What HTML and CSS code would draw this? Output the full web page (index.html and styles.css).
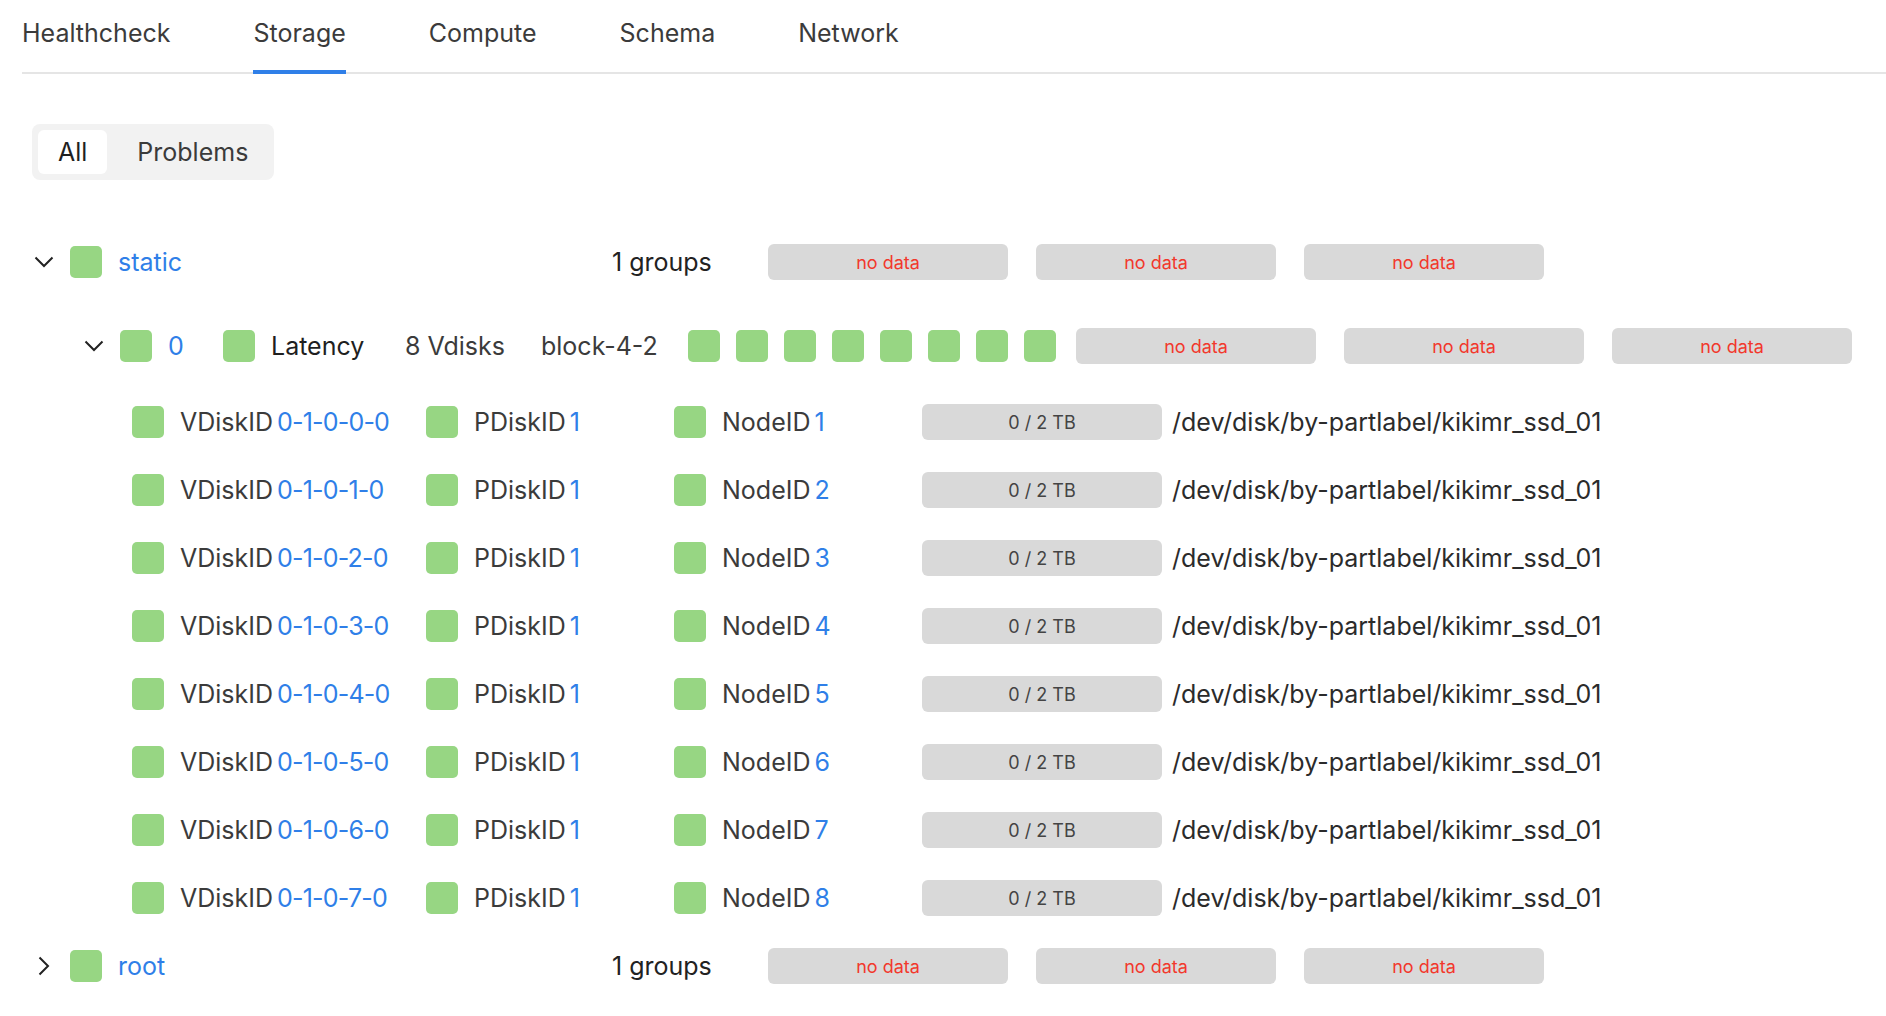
FILE: index.html
```html
<!DOCTYPE html>
<html lang="en">
<head>
<meta charset="utf-8">
<title>Storage</title>
<link rel="stylesheet" href="styles.css">
</head>
<body>
<div class="page">
  <nav class="tabs">
    <div class="tab">Healthcheck</div>
    <div class="tab active">Storage</div>
    <div class="tab">Compute</div>
    <div class="tab">Schema</div>
    <div class="tab">Network</div>
  </nav>

  <div class="segmented">
    <div class="seg-btn selected">All</div>
    <div class="seg-btn">Problems</div>
  </div>

  <div class="tree">
    <div class="row pool">
      <span class="chev"><svg width="20" height="12" viewBox="0 0 20 12"><path d="M1.5 1.5 L10 10 L18.5 1.5" fill="none" stroke="#222" stroke-width="2"/></svg></span>
      <span class="sq"></span>
      <a class="name link">static</a>
      <span class="count">1 groups</span>
      <div class="bars">
        <div class="bar nodata">no data</div>
        <div class="bar nodata">no data</div>
        <div class="bar nodata">no data</div>
      </div>
    </div>

    <div class="row group">
      <span class="chev"><svg width="20" height="12" viewBox="0 0 20 12"><path d="M1.5 1.5 L10 10 L18.5 1.5" fill="none" stroke="#222" stroke-width="2"/></svg></span>
      <span class="sq"></span>
      <a class="gid link">0</a>
      <span class="sq"></span>
      <span class="label strong">Latency</span>
      <span class="meta vd">8 Vdisks</span>
      <span class="meta er">block-4-2</span>
      <div class="minis">
        <span class="sq"></span><span class="sq"></span><span class="sq"></span><span class="sq"></span>
        <span class="sq"></span><span class="sq"></span><span class="sq"></span><span class="sq"></span>
      </div>
      <div class="bars">
        <div class="bar nodata">no data</div>
        <div class="bar nodata">no data</div>
        <div class="bar nodata">no data</div>
      </div>
    </div>

    <div class="vdisks">
      <div class="row vdisk">
        <div class="cell"><span class="sq"></span><span class="label">VDiskID</span><a class="id link">0-1-0-0-0</a></div>
        <div class="cell"><span class="sq"></span><span class="label">PDiskID</span><a class="id link">1</a></div>
        <div class="cell"><span class="sq"></span><span class="label">NodeID</span><a class="id link">1</a></div>
        <div class="bar usage">0 / 2 TB</div>
        <div class="path">/dev/disk/by-partlabel/kikimr_ssd_01</div>
      </div>
      <div class="row vdisk">
        <div class="cell"><span class="sq"></span><span class="label">VDiskID</span><a class="id link">0-1-0-1-0</a></div>
        <div class="cell"><span class="sq"></span><span class="label">PDiskID</span><a class="id link">1</a></div>
        <div class="cell"><span class="sq"></span><span class="label">NodeID</span><a class="id link">2</a></div>
        <div class="bar usage">0 / 2 TB</div>
        <div class="path">/dev/disk/by-partlabel/kikimr_ssd_01</div>
      </div>
      <div class="row vdisk">
        <div class="cell"><span class="sq"></span><span class="label">VDiskID</span><a class="id link">0-1-0-2-0</a></div>
        <div class="cell"><span class="sq"></span><span class="label">PDiskID</span><a class="id link">1</a></div>
        <div class="cell"><span class="sq"></span><span class="label">NodeID</span><a class="id link">3</a></div>
        <div class="bar usage">0 / 2 TB</div>
        <div class="path">/dev/disk/by-partlabel/kikimr_ssd_01</div>
      </div>
      <div class="row vdisk">
        <div class="cell"><span class="sq"></span><span class="label">VDiskID</span><a class="id link">0-1-0-3-0</a></div>
        <div class="cell"><span class="sq"></span><span class="label">PDiskID</span><a class="id link">1</a></div>
        <div class="cell"><span class="sq"></span><span class="label">NodeID</span><a class="id link">4</a></div>
        <div class="bar usage">0 / 2 TB</div>
        <div class="path">/dev/disk/by-partlabel/kikimr_ssd_01</div>
      </div>
      <div class="row vdisk">
        <div class="cell"><span class="sq"></span><span class="label">VDiskID</span><a class="id link">0-1-0-4-0</a></div>
        <div class="cell"><span class="sq"></span><span class="label">PDiskID</span><a class="id link">1</a></div>
        <div class="cell"><span class="sq"></span><span class="label">NodeID</span><a class="id link">5</a></div>
        <div class="bar usage">0 / 2 TB</div>
        <div class="path">/dev/disk/by-partlabel/kikimr_ssd_01</div>
      </div>
      <div class="row vdisk">
        <div class="cell"><span class="sq"></span><span class="label">VDiskID</span><a class="id link">0-1-0-5-0</a></div>
        <div class="cell"><span class="sq"></span><span class="label">PDiskID</span><a class="id link">1</a></div>
        <div class="cell"><span class="sq"></span><span class="label">NodeID</span><a class="id link">6</a></div>
        <div class="bar usage">0 / 2 TB</div>
        <div class="path">/dev/disk/by-partlabel/kikimr_ssd_01</div>
      </div>
      <div class="row vdisk">
        <div class="cell"><span class="sq"></span><span class="label">VDiskID</span><a class="id link">0-1-0-6-0</a></div>
        <div class="cell"><span class="sq"></span><span class="label">PDiskID</span><a class="id link">1</a></div>
        <div class="cell"><span class="sq"></span><span class="label">NodeID</span><a class="id link">7</a></div>
        <div class="bar usage">0 / 2 TB</div>
        <div class="path">/dev/disk/by-partlabel/kikimr_ssd_01</div>
      </div>
      <div class="row vdisk">
        <div class="cell"><span class="sq"></span><span class="label">VDiskID</span><a class="id link">0-1-0-7-0</a></div>
        <div class="cell"><span class="sq"></span><span class="label">PDiskID</span><a class="id link">1</a></div>
        <div class="cell"><span class="sq"></span><span class="label">NodeID</span><a class="id link">8</a></div>
        <div class="bar usage">0 / 2 TB</div>
        <div class="path">/dev/disk/by-partlabel/kikimr_ssd_01</div>
      </div>
    </div>

    <div class="row pool">
      <span class="chev"><svg width="12" height="20" viewBox="0 0 12 20"><path d="M1.5 1.5 L10 10 L1.5 18.5" fill="none" stroke="#222" stroke-width="2"/></svg></span>
      <span class="sq"></span>
      <a class="name link">root</a>
      <span class="count">1 groups</span>
      <div class="bars">
        <div class="bar nodata">no data</div>
        <div class="bar nodata">no data</div>
        <div class="bar nodata">no data</div>
      </div>
    </div>
  </div>
</div>
</body>
</html>
```

FILE: styles.css
```css
* { box-sizing: border-box; }

body {
  margin: 0;
  background: #fff;
  font-family: Inter, "Noto Sans", sans-serif;
  font-size: 25px;
  color: #3b3b3b;
}

.page {
  padding-left: 22px;
}

.tabs {
  display: flex;
  gap: 83px;
  border-bottom: 2px solid #e5e5e5;
}

.tab {
  padding: 18px 0 22px;
  line-height: 30px;
  border-bottom: 4px solid transparent;
  margin-bottom: -2px;
  color: #3b3b3b;
}

.tab.active {
  border-bottom-color: #2f7fe8;
}

.segmented {
  display: inline-flex;
  gap: 10px;
  margin: 50px 0 0 10px;
  padding: 6px;
  height: 56px;
  background: #f2f2f2;
  border-radius: 8px;
}

.seg-btn {
  padding: 0 20px;
  line-height: 44px;
  border-radius: 6px;
  color: #3b3b3b;
}

.seg-btn.selected {
  background: #fff;
  color: #1f1f1f;
}

.tree {
  margin-top: 48px;
  padding-left: 6px;
}

.row {
  display: flex;
  align-items: center;
  height: 68px;
}

.chev {
  width: 32px;
  display: flex;
  align-items: center;
  justify-content: center;
}

.sq {
  display: inline-block;
  flex: none;
  width: 32px;
  height: 32px;
  border-radius: 5px;
  background: #97d683;
}

.link {
  color: #2f7fe8;
  text-decoration: none;
}

.chev + .sq {
  margin-left: 10px;
}

.name {
  margin-left: 16px;
  width: 494px;
  flex: none;
}

.count {
  width: 156px;
  flex: none;
  color: #222;
}

.bars {
  display: flex;
  gap: 28px;
}

.bar {
  width: 240px;
  height: 36px;
  border-radius: 6px;
  background: #d9d9d9;
  display: flex;
  align-items: center;
  justify-content: center;
  font-size: 18px;
}

.nodata {
  color: #f2382c;
}

.usage {
  color: #444;
}

.group {
  margin-top: 16px;
  padding-left: 50px;
}

.gid {
  margin-left: 16px;
  width: 39px;
  flex: none;
}

.gid + .sq {
  margin-left: 16px;
}

.group .label {
  margin-left: 16px;
  width: 134px;
  flex: none;
}

.strong {
  color: #1f1f1f;
}

.meta {
  flex: none;
  color: #3b3b3b;
}

.meta.vd {
  width: 136px;
}

.meta.er {
  width: 147px;
}

.minis {
  display: flex;
  gap: 16px;
}

.group .bars {
  margin-left: 20px;
}

.vdisks {
  margin-top: 8px;
}

.vdisk {
  padding-left: 104px;
  display: grid;
  grid-template-columns: 294px 248px 248px 240px auto;
  align-items: center;
}

.cell {
  display: flex;
  align-items: center;
}

.cell .label {
  margin-left: 16px;
  color: #3b3b3b;
}

.cell .id {
  margin-left: 4px;
  letter-spacing: -0.8px;
}

.path {
  margin-left: 10px;
  color: #2b2b2b;
}
```
